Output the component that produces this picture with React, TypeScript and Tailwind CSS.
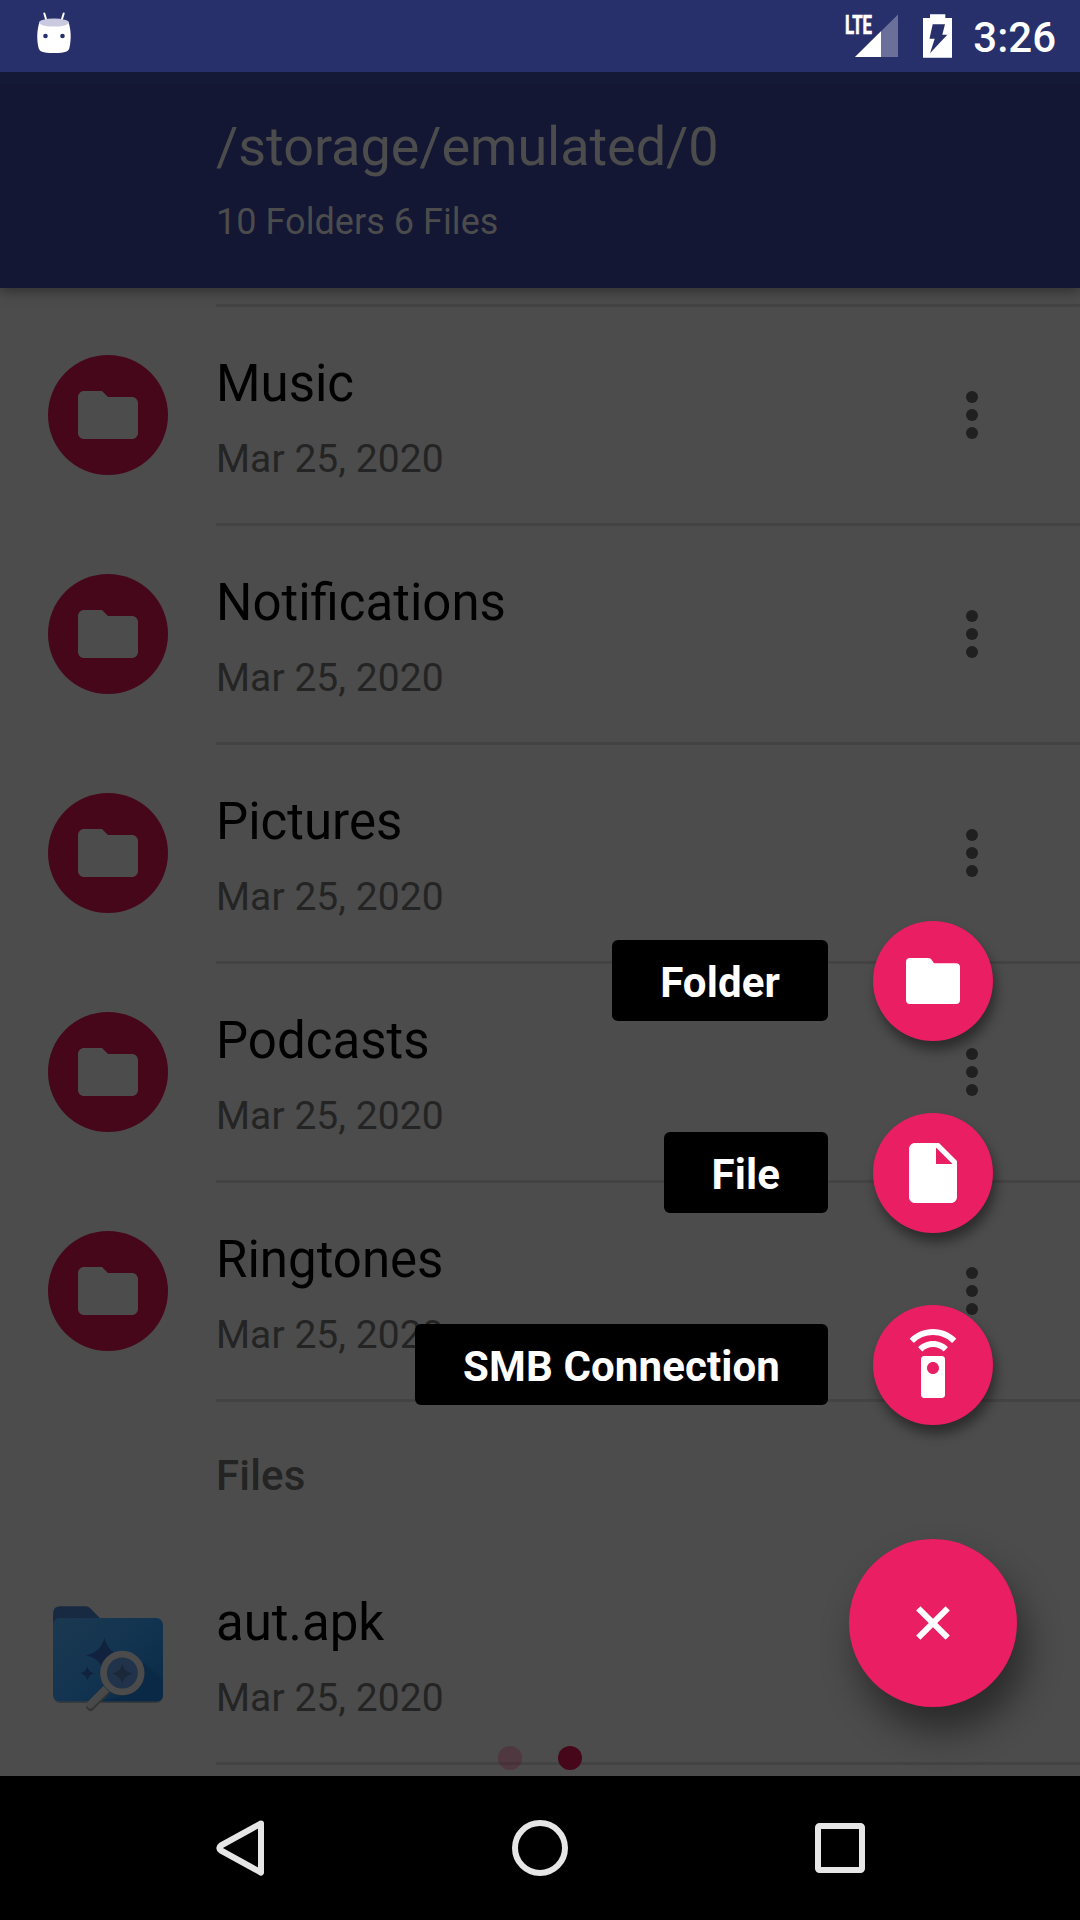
import React from "react";

const rows = ["Music", "Notifications", "Pictures", "Podcasts", "Ringtones"];

function AndroidHead() {
  return (
    <svg className="ml-9 h-[72px] w-9" viewBox="36 0 36 72">
      <path d="M44.3 13.5 46.6 21M63.7 13.5 61.4 21" stroke="#fff" strokeWidth="2" strokeLinecap="round" />
      <path d="M39.3 22.5C37 30 36.500 39 38.600 48 39.200 51 42 53 54 53s14.800-2 15.400-5C71.500 39 71 30 68.700 22.500Z" fill="#fff" />
      <ellipse cx="54" cy="22.600" rx="15" ry="4" fill="#c9cadf" />
      <circle cx="45.500" cy="36" r="2.300" fill="#27306b" />
      <circle cx="62.500" cy="36" r="2.300" fill="#27306b" />
    </svg>
  );
}

function Signal() {
  return (
    <svg className="h-[72px] w-[56px]" viewBox="844 0 56 72">
      <text x="845" y="33.500" fontSize="26" fontWeight="700" fill="#fff" stroke="#fff" strokeWidth="0.7" fontFamily="Roboto, sans-serif" textLength="27" lengthAdjust="spacingAndGlyphs">
        LTE
      </text>
      <path d="M855 57 898 14.500V57Z" fill="#6b709a" />
      <path d="M855 57 881 31.300V57Z" fill="#fff" />
    </svg>
  );
}

function Battery() {
  return (
    <svg className="ml-[22px] h-[72px] w-[32px]" viewBox="922 0 32 72">
      <path d="M930 14.200h15.300V18H952v39.800h-29V18h7Z" fill="#fff" />
      <path d="M932.700 24.300H945L942.300 34.700H947.300L930 53.300 934.700 38.700H929.500Z" fill="#27306b" />
    </svg>
  );
}

function FolderDisc() {
  return (
    <div className="flex size-[120px] items-center justify-center rounded-full bg-[#46071b]">
      <svg className="size-[72px]" viewBox="0 0 24 24" fill="#4c4c4c">
        <path d="M10 4H4c-1.100 0-1.990.9-1.990 2L2 18c0 1.100.9 2 2 2h16c1.100 0 2-.9 2-2V8c0-1.100-.9-2-2-2h-8l-2-2z" />
      </svg>
    </div>
  );
}

function ApkIcon() {
  return (
    <svg className="size-[120px]" viewBox="144 102 360 360">
      <defs>
        <linearGradient id="front" x1="0" y1="0" x2="1" y2="0.8">
          <stop offset="0" stopColor="#1b3850" />
          <stop offset="0.55" stopColor="#133450" />
          <stop offset="1" stopColor="#0b2c49" />
        </linearGradient>
        <linearGradient id="handle" x1="0" y1="0" x2="1" y2="1">
          <stop offset="0" stopColor="#4c4c4c" />
          <stop offset="1" stopColor="#464646" />
        </linearGradient>
      </defs>
      <rect x="160" y="179" width="329" height="250" rx="21" fill="#373a3c" />
      <path d="M159 200V161q0-22 22-22h77q7 0 12 5l32 32v30Z" fill="#182a42" />
      <rect x="159" y="174" width="330" height="250" rx="20" fill="url(#front)" />
      <path d="M432 308 489 360v44q0 20-20 20H300l95-22Z" fill="#0a2845" opacity=".75" />
      <path d="M313 233c9 32 22 44 52 53-30 9-43 22-52 54-9-32-23-45-54-54 31-9 45-21 54-53Z" fill="#10223e" />
      <path d="M262 319c4 14 9 18 21 21-12 4-17 9-21 21-4-12-9-17-21-21 12-3 17-7 21-21Z" fill="#10223e" />
      <path d="M312 376 259 432q-3 6 7 14 6 5 12 0l54-54Z" fill="#333" transform="translate(0 5)" />
      <path d="M314 374 259 430q-3 6 6 14 7 5 12 0l55-54Z" fill="url(#handle)" />
      <circle cx="367" cy="342" r="66" fill="#182b3a" />
      <circle cx="367" cy="339" r="48" fill="#20334a" />
      <circle cx="367" cy="339" r="56.500" fill="none" stroke="#4b4b4b" strokeWidth="20" />
      <path d="M367 311c5 17 12 24 30 30-18 5-25 13-30 30-5-17-12-25-30-30 18-6 25-13 30-30Z" fill="#1b283a" />
    </svg>
  );
}

function Entry({ name, icon, menu }: { name: string; icon: React.ReactNode; menu: boolean }) {
  return (
    <div className="flex h-[219px]">
      <div className="flex h-[216px] w-[216px] shrink-0 items-center pl-12">{icon}</div>
      <div className="flex flex-1 border-b-[3px] border-[#434343]">
        <div className="flex-1 pt-[47px]">
          <div className="text-[51px] leading-[60px] text-black">{name}</div>
          <div className="mt-[21px] text-[39px] leading-[48px] tracking-[0.06px] text-[#242424]">Mar 25, 2020</div>
        </div>
        {menu && (
          <div className="mr-[102px] flex flex-col justify-center gap-1.5">
            <i className="size-3 rounded-full bg-[#202020]" />
            <i className="size-3 rounded-full bg-[#202020]" />
            <i className="size-3 rounded-full bg-[#202020]" />
          </div>
        )}
      </div>
    </div>
  );
}

function Action({ label, children }: { label: string; children: React.ReactNode }) {
  return (
    <div className="flex items-center">
      <div className="mr-[45px] mb-[2px] h-[81px] rounded-md bg-black px-12 text-[42px] leading-[85px] font-bold tracking-[0.12px] whitespace-nowrap text-white">{label}</div>
      <div className="flex size-[120px] items-center justify-center rounded-full bg-[#e91e63] shadow-[3px_9px_12px_rgba(0,0,0,0.42)]">{children}</div>
    </div>
  );
}

const navShapes = [
  <path key="back" d="M57 11.500 17 33.500Q13.500 36 17 38.500L57 60.500Z" />,
  <circle key="home" cx="36" cy="36" r="25" />,
  <rect key="recents" x="14" y="14" width="44" height="44" rx="1.500" />,
];

export default function App() {
  return (
    <div className="relative flex h-[1920px] w-[1080px] flex-col overflow-hidden bg-[#4c4c4c] font-[Roboto,sans-serif]">
      <div className="z-20 flex h-[72px] shrink-0 items-center bg-[#27306b]">
        <AndroidHead />
        <div className="flex-1" />
        <Signal />
        <Battery />
        <div className="mr-6 ml-[19px] pt-[3px] text-[42px] leading-[75px] font-medium text-white">3:26</div>
      </div>

      <header className="z-10 h-[216px] shrink-0 border-t-[12px] border-[#141936] bg-[#131734] pl-[216px] text-[#4c4c4c] shadow-[0_3px_12px_rgba(0,0,0,0.4)]">
        <div className="pt-[31px] text-[54px] leading-[64px] tracking-[-0.05px]">/storage/emulated/0</div>
        <div className="mt-[21px] text-[36px] leading-[44px] tracking-[0.05px]">10 Folders 6 Files</div>
      </header>

      <main className="h-[1488px] shrink-0 overflow-hidden pt-4">
        <div className="ml-[216px] h-[3px] bg-[#434343]" />
        {rows.map((name) => (
          <Entry key={name} name={name} icon={<FolderDisc />} menu />
        ))}
        <div className="h-[144px] pl-[216px] text-[42px] leading-[147px] font-medium tracking-[0.15px] text-[#242424]">Files</div>
        <Entry name="aut.apk" icon={<ApkIcon />} menu={false} />
      </main>

      <nav className="flex h-[144px] shrink-0 items-center justify-around bg-black px-[90px]">
        {navShapes.map((shape) => (
          <svg key={shape.key} className="size-[72px]" viewBox="0 0 72 72" fill="none" stroke="#e6e6e6" strokeWidth="6" strokeLinejoin="round">
            {shape}
          </svg>
        ))}
      </nav>

      <div className="absolute top-[1746px] left-[498px] flex gap-9">
        <i className="size-6 rounded-full bg-[#5a0a28]/30" />
        <i className="size-6 rounded-full bg-[#46071b]" />
      </div>

      <div className="absolute top-[921px] right-[87px] z-20 flex flex-col items-end gap-[72px]">
        <Action label="Folder">
          <svg className="h-[46px] w-[54px]" viewBox="0 0 54 46" fill="#fff">
            <path d="M4 0H22q2 0 3 1L28 5.300H50q4 0 4 4V42q0 4-4 4H4q-4 0-4-4V4q0-4 4-4Z" />
          </svg>
        </Action>
        <Action label="File">
          <svg className="size-[72px]" viewBox="0 0 24 24" fill="#fff">
            <path d="M6 2c-1.100 0-1.990.9-1.990 2L4 20c0 1.100.89 2 1.990 2H18c1.100 0 2-.9 2-2V8l-6-6H6zm7 7V3.500L18.500 9H13z" />
          </svg>
        </Action>
        <Action label="SMB Connection">
          <svg className="size-[72px]" viewBox="0 0 24 24" fill="#fff">
            <path d="M15 9H9c-.55 0-1 .45-1 1v12c0 .55.45 1 1 1h6c.55 0 1-.45 1-1V10c0-.55-.45-1-1-1zm-3 6c-1.100 0-2-.9-2-2s.9-2 2-2 2 .9 2 2-.9 2-2 2zM7.050 6.050l1.410 1.410C9.370 6.560 10.620 6 12 6s2.630.56 3.540 1.460l1.410-1.410C15.680 4.780 13.930 4 12 4s-3.680.78-4.950 2.050zM12 0C8.960 0 6.210 1.230 4.220 3.220l1.410 1.410C7.260 3.010 9.510 2 12 2s4.740 1.010 6.360 2.640l1.410-1.410C17.790 1.230 15.040 0 12 0z" />
          </svg>
        </Action>
      </div>

      <div className="absolute top-[1539px] left-[849px] z-20 flex size-[168px] items-center justify-center rounded-full bg-[#e91e63] shadow-[9px_24px_36px_rgba(0,0,0,0.45)]">
        <svg className="size-[34px]" viewBox="0 0 34 34" stroke="#fff" strokeWidth="6">
          <path d="M2.300 2.300 31.700 31.700M31.700 2.300 2.300 31.700" />
        </svg>
      </div>
    </div>
  );
}
